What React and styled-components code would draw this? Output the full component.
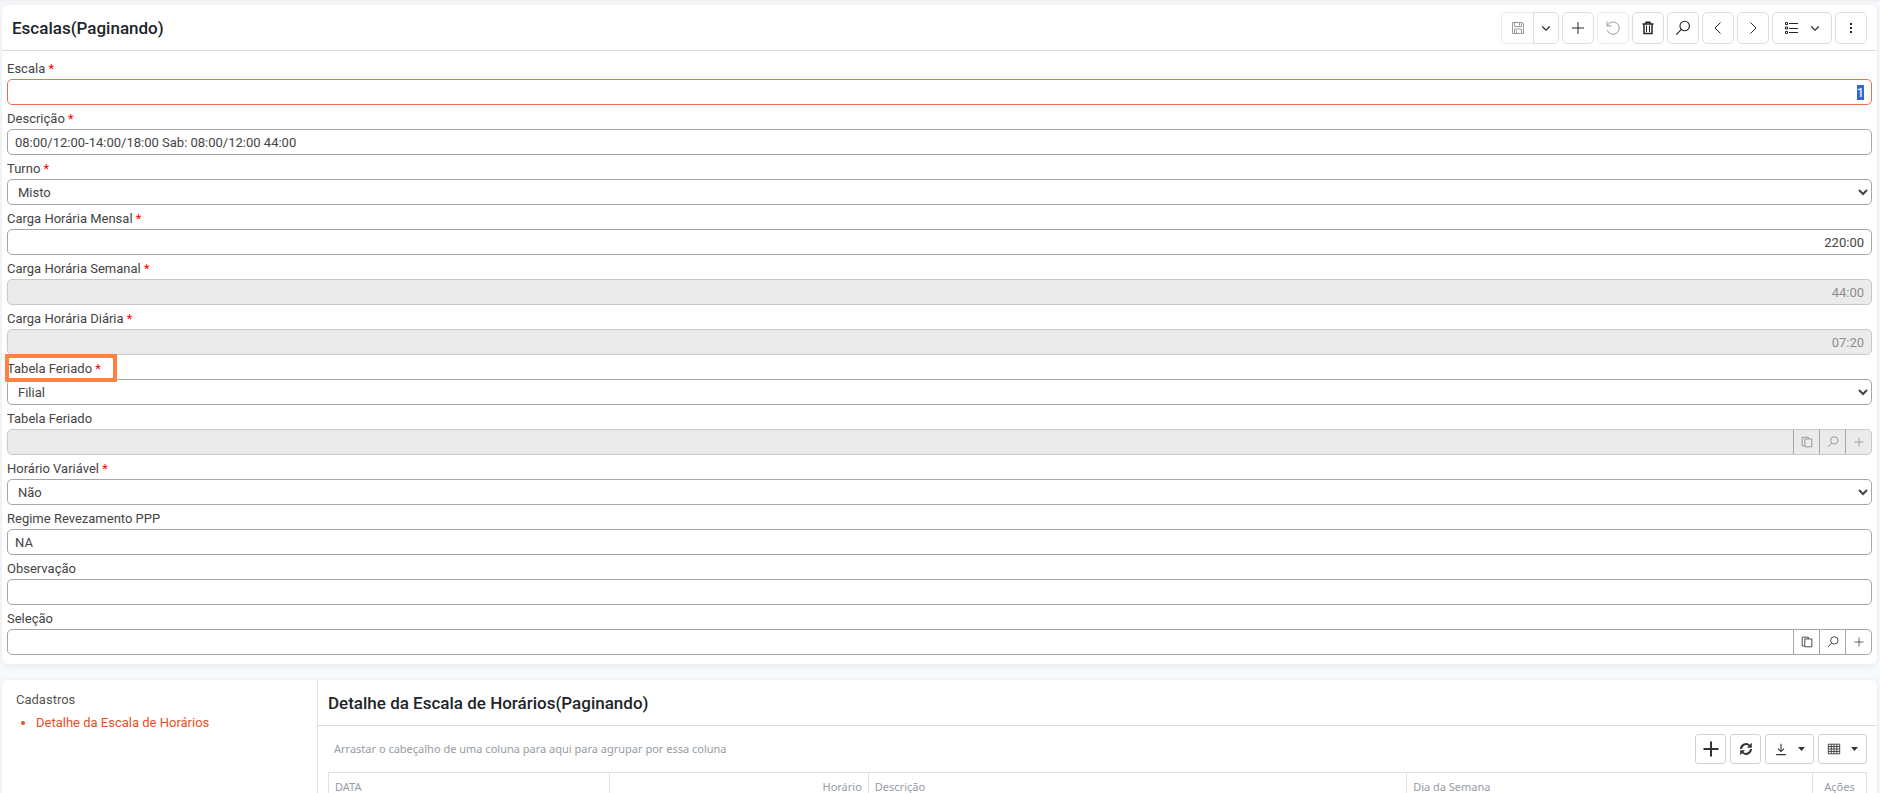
import React, { useEffect, useRef } from "react";
import styled, { createGlobalStyle, css } from "styled-components";

const GlobalStyle = createGlobalStyle`
  *, *::before, *::after { box-sizing: border-box; }
  body {
    margin: 0;
    background: #f8f9fb;
    color: #444;
    font: 13px/20px Roboto, "Liberation Sans", sans-serif;
  }
  input, select, button { font: inherit; color: inherit; }
  ::selection { background: #3367d1; color: #fff; }
`;

const Page = styled.main`
  height: 100vh;
  overflow-y: auto;
  scrollbar-width: none;
  padding: 3px 3px 0 2px;
  border-top: 2px solid #f0f1f4;
`;

const Card = styled.section`
  background: #fff;
  border-radius: 6px;
  box-shadow: 0 1px 6px rgba(40, 50, 70, 0.09);
`;

const CardHeader = styled.header`
  display: flex;
  align-items: center;
  justify-content: space-between;
  height: 46px;
  padding: 0 10px;
  border-bottom: 1px solid #dcdcdc;
`;

const Title = styled.h1`
  margin: 0;
  font-size: 17px;
  font-weight: 500;
  line-height: 24px;
  color: #212529;
`;

const Toolbar = styled.div`
  display: flex;
  gap: ${(p) => p.$gap || 3}px;
`;

const ToolButton = styled.button`
  display: flex;
  align-items: center;
  justify-content: center;
  gap: 10px;
  width: ${(p) => p.$width || 32}px;
  height: 32px;
  padding: 0;
  background: #fff;
  border: 1px solid #dcdde0;
  border-radius: 5px;
  color: #26262a;
  &:disabled { color: #9a9a9a; border-color: #ececec; }
`;

const SplitGroup = styled.div`
  display: flex;
  ${ToolButton}:first-child { border-radius: 5px 0 0 5px; border-right: 0; }
  ${ToolButton}:last-child { border-radius: 0 5px 5px 0; }
`;

const Form = styled.form`
  display: flex;
  flex-direction: column;
  gap: 4px;
  padding: 8px 5px 9px;
`;

const Field = styled.div`
  display: flex;
  flex-direction: column;
`;

const Label = styled.label`
  position: relative;
  align-self: flex-start;
  ${(p) => p.$marked && css`
    &::after {
      content: "";
      position: absolute;
      z-index: 1;
      inset: -5px -16px -3px -2px;
      border: 4px solid #ff8040;
      border-radius: 1px;
    }
  `}
`;

const Required = styled.span`
  color: #f00;
`;

const controlStyle = css`
  width: 100%;
  height: 26px;
  border: 1px solid #a6a6a6;
  border-radius: 5px;
  background: #fff;
  outline: 0;
  &:disabled {
    background: #ebebeb;
    border-color: #c8c8c8;
    color: #8e8e8e;
    opacity: 1;
  }
`;

const TextInput = styled.input`
  ${controlStyle}
  padding: 0 7px;
  text-align: ${(p) => (p.$right ? "right" : "left")};
  &:focus { border-color: #ee6f48; }
`;

const Select = styled.select`
  ${controlStyle}
  padding: 0 2px 0 6px;
`;

const Lookup = styled.div`
  display: flex;
  height: 26px;
  border: 1px solid ${(p) => (p.$disabled ? "#c8c8c8" : "#a6a6a6")};
  border-radius: 5px;
  background: ${(p) => (p.$disabled ? "#ebebeb" : "#fff")};
  color: ${(p) => (p.$disabled ? "#8e8e8e" : "#333")};
`;

const LookupInput = styled.input`
  flex: 1;
  min-width: 0;
  border: 0;
  outline: 0;
  padding: 0 7px;
  background: transparent;
`;

const LookupButton = styled.button`
  display: flex;
  align-items: center;
  justify-content: center;
  width: 26px;
  padding: 0;
  border: 0;
  border-left: 1px solid #a6a6a6;
  background: transparent;
`;

const DetailCard = styled(Card)`
  display: flex;
  margin-top: 16px;
`;

const Sidebar = styled.nav`
  flex: 0 0 315px;
  padding: 10px 14px;
`;

const SidebarTitle = styled.div`
  color: #555;
`;

const SidebarList = styled.ul`
  margin: 3px 0 0;
  padding-left: 20px;
  color: #e8501f;
`;

const SidebarLink = styled.a`
  color: inherit;
  text-decoration: none;
`;

const Detail = styled.div`
  flex: 1;
  min-width: 0;
  border-left: 1px solid #e2e2e2;
`;

const GridArea = styled.div`
  padding: 8px 10px 10px;
  font-family: "Noto Sans", sans-serif;
  font-size: 11px;
  color: #959ca3;
`;

const GridTop = styled.div`
  display: flex;
  align-items: center;
  justify-content: space-between;
  margin-bottom: 8px;
  padding-left: 6px;
`;

const GridButton = styled(ToolButton)`
  height: 30px;
  width: ${(p) => p.$width || 31}px;
  border-color: #cdd2d6;
  border-radius: 3px;
  color: #333;
`;

const Table = styled.table`
  width: 100%;
  table-layout: fixed;
  border-collapse: collapse;
`;

const Th = styled.th`
  width: ${(p) => p.$width};
  height: 28px;
  padding: 0 6px;
  border: 1px solid #dfe2e4;
  font-weight: 400;
  text-align: ${(p) => p.$align || "left"};
`;

function Icon({ size = 16, children, stroke = 1 }) {
  return (
    <svg width={size} height={size} viewBox="0 0 16 16" fill="none" stroke="currentColor" strokeWidth={stroke} aria-hidden="true">
      {children}
    </svg>
  );
}

const SaveIcon = () => (
  <Icon>
    <path d="M2.5 2.5h9.5l1.5 1.5v9.5h-11zM4.500 2.500v4h7v-4M4.500 13.500v-4.500h7v4.500M6.500 10.500v3M9.500 3v2.500" />
  </Icon>
);
const PlusIcon = ({ size = 16, stroke = 1 }) => (
  <Icon size={size} stroke={stroke}><path d="M8 2v12M2 8h12" /></Icon>
);
const ChevronDown = () => (
  <Icon size={12} stroke={1.5}><path d="M3 6l5 5 5-5" /></Icon>
);
const UndoIcon = () => (
  <Icon><path d="M2 1.500v4.500h4.500M2.300 5.800A6.200 6.200 0 1 1 2.200 10.200" /></Icon>
);
const TrashIcon = () => (
  <Icon>
    <path strokeWidth="1.5" d="M2.500 4h11M6 3.800V2.200h4v1.600M4 4v9.500h8V4" />
    <path d="M6.500 5.500v6.500M9.500 5.500v6.500" />
  </Icon>
);
const SearchIcon = ({ size = 18 }) => (
  <Icon size={size}>
    <circle cx="9.500" cy="6.200" r="4.200" />
    <path d="M6.500 9.300L2 13.800" />
  </Icon>
);
const LeftIcon = () => <Icon><path d="M10.500 2.500L5 8l5.500 5.500" /></Icon>;
const RightIcon = () => <Icon><path d="M5.500 2.500L11 8l-5.500 5.500" /></Icon>;
const ListIcon = () => (
  <Icon>
    <path d="M2.500 2.500h2v2h-2zM2.500 7h2v2h-2zM2.500 11.500h2v2h-2zM6 3.500h9M6 8.500h9M6 12.500h9" />
  </Icon>
);
const DotsIcon = () => (
  <Icon>
    <g fill="currentColor" stroke="none">
      <rect x="7" y="3" width="2" height="2" />
      <rect x="7" y="7" width="2" height="2" />
      <rect x="7" y="11" width="2" height="2" />
    </g>
  </Icon>
);
const CopyIcon = () => (
  <Icon size={14}><path d="M5 12.500H2.500v-10h7v2M5.500 4.500h8v9h-8z" /></Icon>
);
const RefreshIcon = () => (
  <Icon stroke={2}>
    <path d="M3 8a5 5 0 0 1 8.500-3.400M13 8a5 5 0 0 1-8.500 3.400" />
    <path d="M13.800 1.800v5H9zM2.200 14.200v-5H7z" fill="currentColor" stroke="none" />
  </Icon>
);
const DownloadIcon = () => (
  <Icon size={14} stroke={1.2}><path d="M8 2v9M4.500 7.500L8 11l3.500-3.500M2.500 14.400h11" /></Icon>
);
const CaretIcon = () => (
  <svg width="7" height="4" viewBox="0 0 7 4" aria-hidden="true"><path d="M0 0h7L3.500 4z" fill="currentColor" /></svg>
);
const TableIcon = () => (
  <Icon size={14}>
    <path d="M1.500 2.500h13v11h-13zM1.500 5.200h13M1.500 8h13M1.500 10.800h13M4.800 2.500v11M8 2.500v11M11.200 2.500v11" />
  </Icon>
);

const fields = [
  { id: "escala", label: "Escala", required: true, value: "1", right: true, focused: true },
  { id: "descricao", label: "Descrição", required: true, value: "08:00/12:00-14:00/18:00 Sab: 08:00/12:00 44:00" },
  { id: "turno", label: "Turno", required: true, value: "Misto", kind: "select" },
  { id: "mensal", label: "Carga Horária Mensal", required: true, value: "220:00", right: true },
  { id: "semanal", label: "Carga Horária Semanal", required: true, value: "44:00", right: true, disabled: true },
  { id: "diaria", label: "Carga Horária Diária", required: true, value: "07:20", right: true, disabled: true },
  { id: "tipo-feriado", label: "Tabela Feriado", required: true, value: "Filial", kind: "select", marked: true },
  { id: "feriado", label: "Tabela Feriado", value: "", kind: "lookup", disabled: true },
  { id: "variavel", label: "Horário Variável", required: true, value: "Não", kind: "select" },
  { id: "regime", label: "Regime Revezamento PPP", value: "NA" },
  { id: "observacao", label: "Observação", value: "" },
  { id: "selecao", label: "Seleção", value: "", kind: "lookup" },
];

function Control({ field }) {
  const ref = useRef(null);
  useEffect(() => {
    if (field.focused && ref.current) {
      ref.current.focus();
      ref.current.select();
    }
  }, [field.focused]);

  if (field.kind === "select") {
    return (
      <Select id={field.id} defaultValue={field.value}>
        <option>{field.value}</option>
      </Select>
    );
  }
  if (field.kind === "lookup") {
    return (
      <Lookup $disabled={field.disabled}>
        <LookupInput id={field.id} defaultValue={field.value} disabled={field.disabled} />
        <LookupButton type="button" aria-label="Copiar" disabled={field.disabled}><CopyIcon /></LookupButton>
        <LookupButton type="button" aria-label="Pesquisar" disabled={field.disabled}><SearchIcon size={14} /></LookupButton>
        <LookupButton type="button" aria-label="Adicionar" disabled={field.disabled}><PlusIcon size={12} /></LookupButton>
      </Lookup>
    );
  }
  return <TextInput ref={ref} id={field.id} defaultValue={field.value} disabled={field.disabled} $right={field.right} />;
}

export default function App() {
  return (
    <>
      <GlobalStyle />
      <Page>
        <Card>
          <CardHeader>
            <Title>Escalas(Paginando)</Title>
            <Toolbar>
              <SplitGroup>
                <ToolButton disabled aria-label="Salvar"><SaveIcon /></ToolButton>
                <ToolButton $width={26} aria-label="Opções de salvar"><ChevronDown /></ToolButton>
              </SplitGroup>
              <ToolButton aria-label="Novo"><PlusIcon /></ToolButton>
              <ToolButton disabled aria-label="Desfazer"><UndoIcon /></ToolButton>
              <ToolButton aria-label="Excluir"><TrashIcon /></ToolButton>
              <ToolButton aria-label="Pesquisar"><SearchIcon /></ToolButton>
              <ToolButton aria-label="Anterior"><LeftIcon /></ToolButton>
              <ToolButton aria-label="Próximo"><RightIcon /></ToolButton>
              <ToolButton $width={60} aria-label="Visualização"><ListIcon /><ChevronDown /></ToolButton>
              <ToolButton aria-label="Mais"><DotsIcon /></ToolButton>
            </Toolbar>
          </CardHeader>
          <Form onSubmit={(e) => e.preventDefault()}>
            {fields.map((field) => (
              <Field key={field.id}>
                <Label htmlFor={field.id} $marked={field.marked}>
                  {field.label}{field.required && <Required> *</Required>}
                </Label>
                <Control field={field} />
              </Field>
            ))}
          </Form>
        </Card>

        <DetailCard>
          <Sidebar>
            <SidebarTitle>Cadastros</SidebarTitle>
            <SidebarList>
              <li><SidebarLink href="#detalhe">Detalhe da Escala de Horários</SidebarLink></li>
            </SidebarList>
          </Sidebar>
          <Detail id="detalhe">
            <CardHeader>
              <Title as="h2">Detalhe da Escala de Horários(Paginando)</Title>
            </CardHeader>
            <GridArea>
              <GridTop>
                <span>Arrastar o cabeçalho de uma coluna para aqui para agrupar por essa coluna</span>
                <Toolbar $gap={4}>
                  <GridButton aria-label="Adicionar"><PlusIcon size={20} stroke={1.6} /></GridButton>
                  <GridButton aria-label="Atualizar"><RefreshIcon /></GridButton>
                  <GridButton $width={49} aria-label="Exportar"><DownloadIcon /><CaretIcon /></GridButton>
                  <GridButton $width={49} aria-label="Colunas"><TableIcon /><CaretIcon /></GridButton>
                </Toolbar>
              </GridTop>
              <Table>
                <thead>
                  <tr>
                    <Th $width="18.3%">DATA</Th>
                    <Th $width="16.8%" $align="right">Horário</Th>
                    <Th $width="35%">Descrição</Th>
                    <Th>Dia da Semana</Th>
                    <Th $width="54px" $align="center">Ações</Th>
                  </tr>
                </thead>
              </Table>
            </GridArea>
          </Detail>
        </DetailCard>
      </Page>
    </>
  );
}
